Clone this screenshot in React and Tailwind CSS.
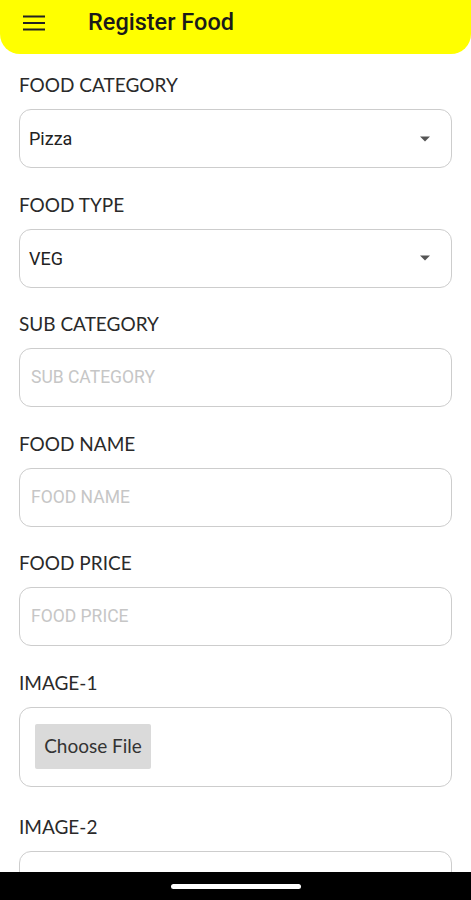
import { useState } from "react";

const lato = { fontFamily: "Lato, 'Open Sans', sans-serif" };

const Caret = () => (
  <svg width="12" height="6" viewBox="0 0 12 6" className="text-[#555]">
    <path d="M1 0.5h10L6 5.5z" fill="currentColor" />
  </svg>
);

const Label = ({ children }) => (
  <div className="font-['Lato',sans-serif] text-[19px] leading-[24px] text-[#2a2a2a] mb-[12px]">
    {children}
  </div>
);

const SelectBox = ({ value }) => (
  <div className="h-[59px] border border-[#cdcdcd] rounded-[12px] flex items-center justify-between pl-[9px] pr-[20px]">
    <span className="font-['Roboto',sans-serif] text-[18px] text-[#222]">{value}</span>
    <Caret />
  </div>
);

const TextBox = ({ placeholder }) => {
  const [val, setVal] = useState("");
  return (
    <div className="h-[59px] border border-[#cdcdcd] rounded-[12px] flex items-center pl-[11px] pr-3">
      <input
        value={val}
        onChange={(e) => setVal(e.target.value)}
        placeholder={placeholder}
        className="w-full outline-none bg-transparent font-['Roboto',sans-serif] text-[17.5px] text-[#222] placeholder:text-[#c6c6c6]"
      />
    </div>
  );
};

const FileBox = ({ empty }) => (
  <div className="h-[80px] border border-[#cdcdcd] rounded-[12px] flex items-center pl-[15px]">
    {!empty && (
      <button className="w-[116px] h-[45px] bg-[#dadada] rounded-[2px] font-['Lato',sans-serif] text-[19px] text-[#333]">
        Choose File
      </button>
    )}
  </div>
);

export default function App() {
  const fields = [
    { label: "FOOD CATEGORY", el: <SelectBox value="Pizza" /> },
    { label: "FOOD TYPE", el: <SelectBox value="VEG" /> },
    { label: "SUB CATEGORY", el: <TextBox placeholder="SUB CATEGORY" /> },
    { label: "FOOD NAME", el: <TextBox placeholder="FOOD NAME" /> },
    { label: "FOOD PRICE", el: <TextBox placeholder="FOOD PRICE" /> },
    { label: "IMAGE-1", el: <FileBox /> },
    { label: "IMAGE-2", el: <FileBox empty />, extra: "mt-[4px]" },
  ];

  return (
    <div className="w-[471px] h-[900px] bg-white flex flex-col overflow-hidden" style={lato}>
      <div className="h-[54px] shrink-0 bg-[#ffff00] rounded-b-[20px] flex items-center pl-[23px] pb-[9px]">
        <svg width="22" height="16" viewBox="0 0 22 16" className="text-[#222]">
          <path d="M0 1.5h22M0 8h22M0 14.5h22" stroke="currentColor" strokeWidth="2" />
        </svg>
        <h1 className="ml-[43px] font-['Roboto',sans-serif] font-medium text-[23.5px] text-[#1a1a1a] leading-none">
          Register Food
        </h1>
      </div>

      <div className="flex-1 overflow-hidden px-[19px] pt-[19px] flex flex-col gap-[24.5px]">
        {fields.map((f) => (
          <div key={f.label} className={"shrink-0 " + (f.extra || "")}>
            <Label>{f.label}</Label>
            {f.el}
          </div>
        ))}
      </div>

      <div className="h-[28px] shrink-0 bg-black flex items-center justify-center">
        <div className="w-[130px] h-[5px] rounded-full bg-white" />
      </div>
    </div>
  );
}
